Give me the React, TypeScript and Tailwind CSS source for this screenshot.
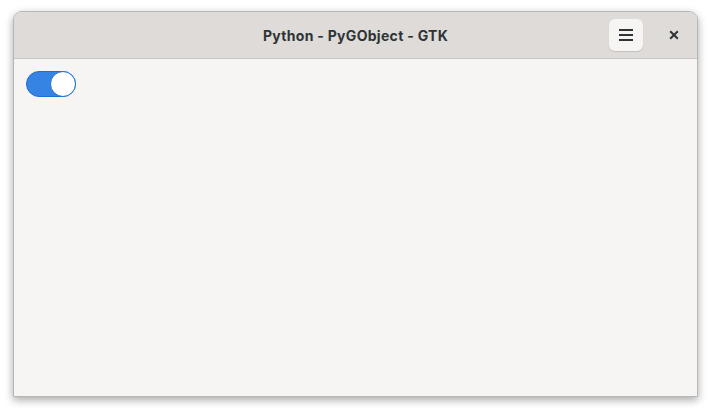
export default function App() {
  return (
    <div className="w-[711px] h-[413px] bg-white relative overflow-hidden" style={{ fontFamily: "Inter, 'Noto Sans', sans-serif" }}>
      <div className="absolute left-[13px] top-[11px] w-[685px] h-[386px] rounded-t-[9px] border border-[#b8b6b3] bg-[#f6f5f4] flex flex-col overflow-hidden shadow-[0_3px_9px_rgba(0,0,0,0.35)]">
        <div className="h-[47px] shrink-0 bg-[#dedbd8] border-b border-[#c8c5c2] relative flex items-center justify-center">
          <span className="text-[14px] font-bold text-[#2e3436] tracking-[0.3px]">Python - PyGObject - GTK</span>
          <div className="absolute left-[595px] top-[7px] w-[34px] h-[32px] rounded-[6px] bg-[#f6f5f4] shadow-[0_1px_1px_rgba(0,0,0,0.12)] flex items-center justify-center">
            <svg width="16" height="14" viewBox="0 0 16 14">
              <rect x="1" y="1" width="14" height="2" fill="#2e3436" />
              <rect x="1" y="6" width="14" height="2" fill="#2e3436" />
              <rect x="1" y="11" width="14" height="2" fill="#2e3436" />
            </svg>
          </div>
          <div className="absolute left-[650px] top-[13px] w-[20px] h-[20px] flex items-center justify-center">
            <svg width="10" height="10" viewBox="0 0 10 10">
              <path d="M1.2 1.2 L8.8 8.8 M8.8 1.2 L1.2 8.8" stroke="#2e3436" strokeWidth="2" strokeLinecap="butt" />
            </svg>
          </div>
        </div>
        <div className="flex-1 p-[12px] pt-[12px]">
          <div className="w-[50px] h-[26px] rounded-full bg-[#3584e4] border border-[#1c6ed4] relative">
            <div className="absolute right-[-1px] top-[-1px] w-[26px] h-[26px] rounded-full bg-white border border-[#1c6ed4]" />
          </div>
        </div>
      </div>
    </div>
  );
}
